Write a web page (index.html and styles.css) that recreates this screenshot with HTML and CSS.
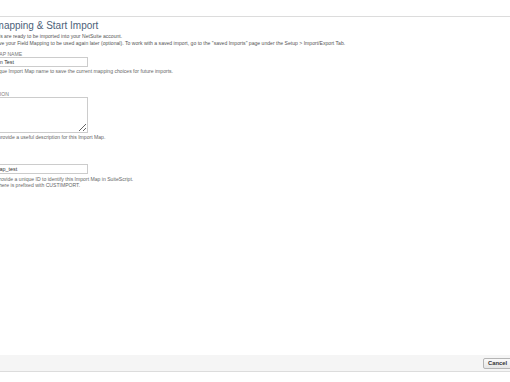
FILE: index.html
```html
<!DOCTYPE html>
<html lang="en">
<head>
    <meta charset="UTF-8">
    <title>Save Mapping &amp; Start Import</title>
    <link rel="stylesheet" href="styles.css">
</head>
<body>
    <div class="topbar"></div>
    <div class="page">
        <h1 class="title">Save mapping &amp; Start Import</h1>
        <p class="intro">Your records are ready to be imported into your NetSuite account.</p>
        <p class="intro">You can save your Field Mapping to be used again later (optional). To work with a saved import, go to the "saved Imports" page under the Setup &gt; Import/Export Tab.</p>

        <div class="field">
            <label class="label">IMPORT MAP NAME</label>
            <input class="input" type="text" value="Sales Plan Test">
            <div class="help">Enter a unique Import Map name to save the current mapping choices for future imports.</div>
        </div>

        <div class="field">
            <label class="label">DESCRIPTION</label>
            <textarea class="area"></textarea>
            <div class="help">Please do provide a useful description for this Import Map.</div>
        </div>

        <div class="field">
            <label class="label">ID</label>
            <input class="input" type="text" value="import_map_test">
            <div class="help">You must provide a unique ID to identify this Import Map in SuiteScript.<br>The ID set here is prefixed with CUSTIMPORT.</div>
        </div>
    </div>
    <div class="footer">
        <button class="btn">Cancel</button>
    </div>
</body>
</html>
```

FILE: styles.css
```css
html, body {
    margin: 0;
    padding: 0;
    background: #fff;
    overflow: hidden;
}
body {
    width: 510px;
    height: 382px;
    position: relative;
    font-family: "Liberation Sans", Arial, sans-serif;
    color: #444;
}
.topbar {
    height: 16px;
    border-bottom: 1px solid #dcdcdc;
}
.page {
    margin-left: -26px;
    padding-top: 3px;
}
.title {
    margin: 0 0 0 -4px;
    font-size: 10px;
    font-weight: normal;
    color: #4d5f79;
    line-height: 12px;
}
.intro {
    margin: 1px 0 0 0;
    font-size: 5.1px;
    line-height: 6px;
    color: #555;
}
.field {
    margin-top: 5px;
}
.field + .field {
    margin-top: 17px;
}
.field:last-child {
    margin-top: 18px;
}
.label {
    display: block;
    font-size: 5.1px;
    line-height: 6px;
    color: #777;
}
.input {
    display: block;
    box-sizing: border-box;
    width: 114px;
    height: 10px;
    margin: 0;
    padding: 0 2px;
    border: 1px solid #ccc;
    font-family: "Liberation Sans", Arial, sans-serif;
    font-size: 5.4px;
    color: #333;
    outline: none;
}
.area {
    display: block;
    box-sizing: border-box;
    width: 114px;
    height: 36px;
    margin: 0 0 1px 0;
    border: 1px solid #ccc;
    resize: both;
    outline: none;
}
.help {
    margin-top: 1px;
    font-size: 5.1px;
    line-height: 6px;
    color: #666;
}
.field:last-child .help {
    margin-top: 2px;
}
.footer {
    position: absolute;
    left: 0;
    right: 0;
    top: 355px;
    height: 16px;
    background: #f5f5f5;
    border-bottom: 1px solid #dcdcdc;
    display: flex;
    justify-content: flex-end;
    align-items: center;
    overflow: hidden;
}
.btn {
    margin-right: -12px;
    height: 11px;
    padding: 0 14px 0 4px;
    border: 1px solid #b5b5b5;
    border-radius: 2px;
    background: linear-gradient(#fafafa, #e6e6e6);
    font-family: "Liberation Sans", Arial, sans-serif;
    font-size: 5.8px;
    font-weight: bold;
    color: #333;
}
```
